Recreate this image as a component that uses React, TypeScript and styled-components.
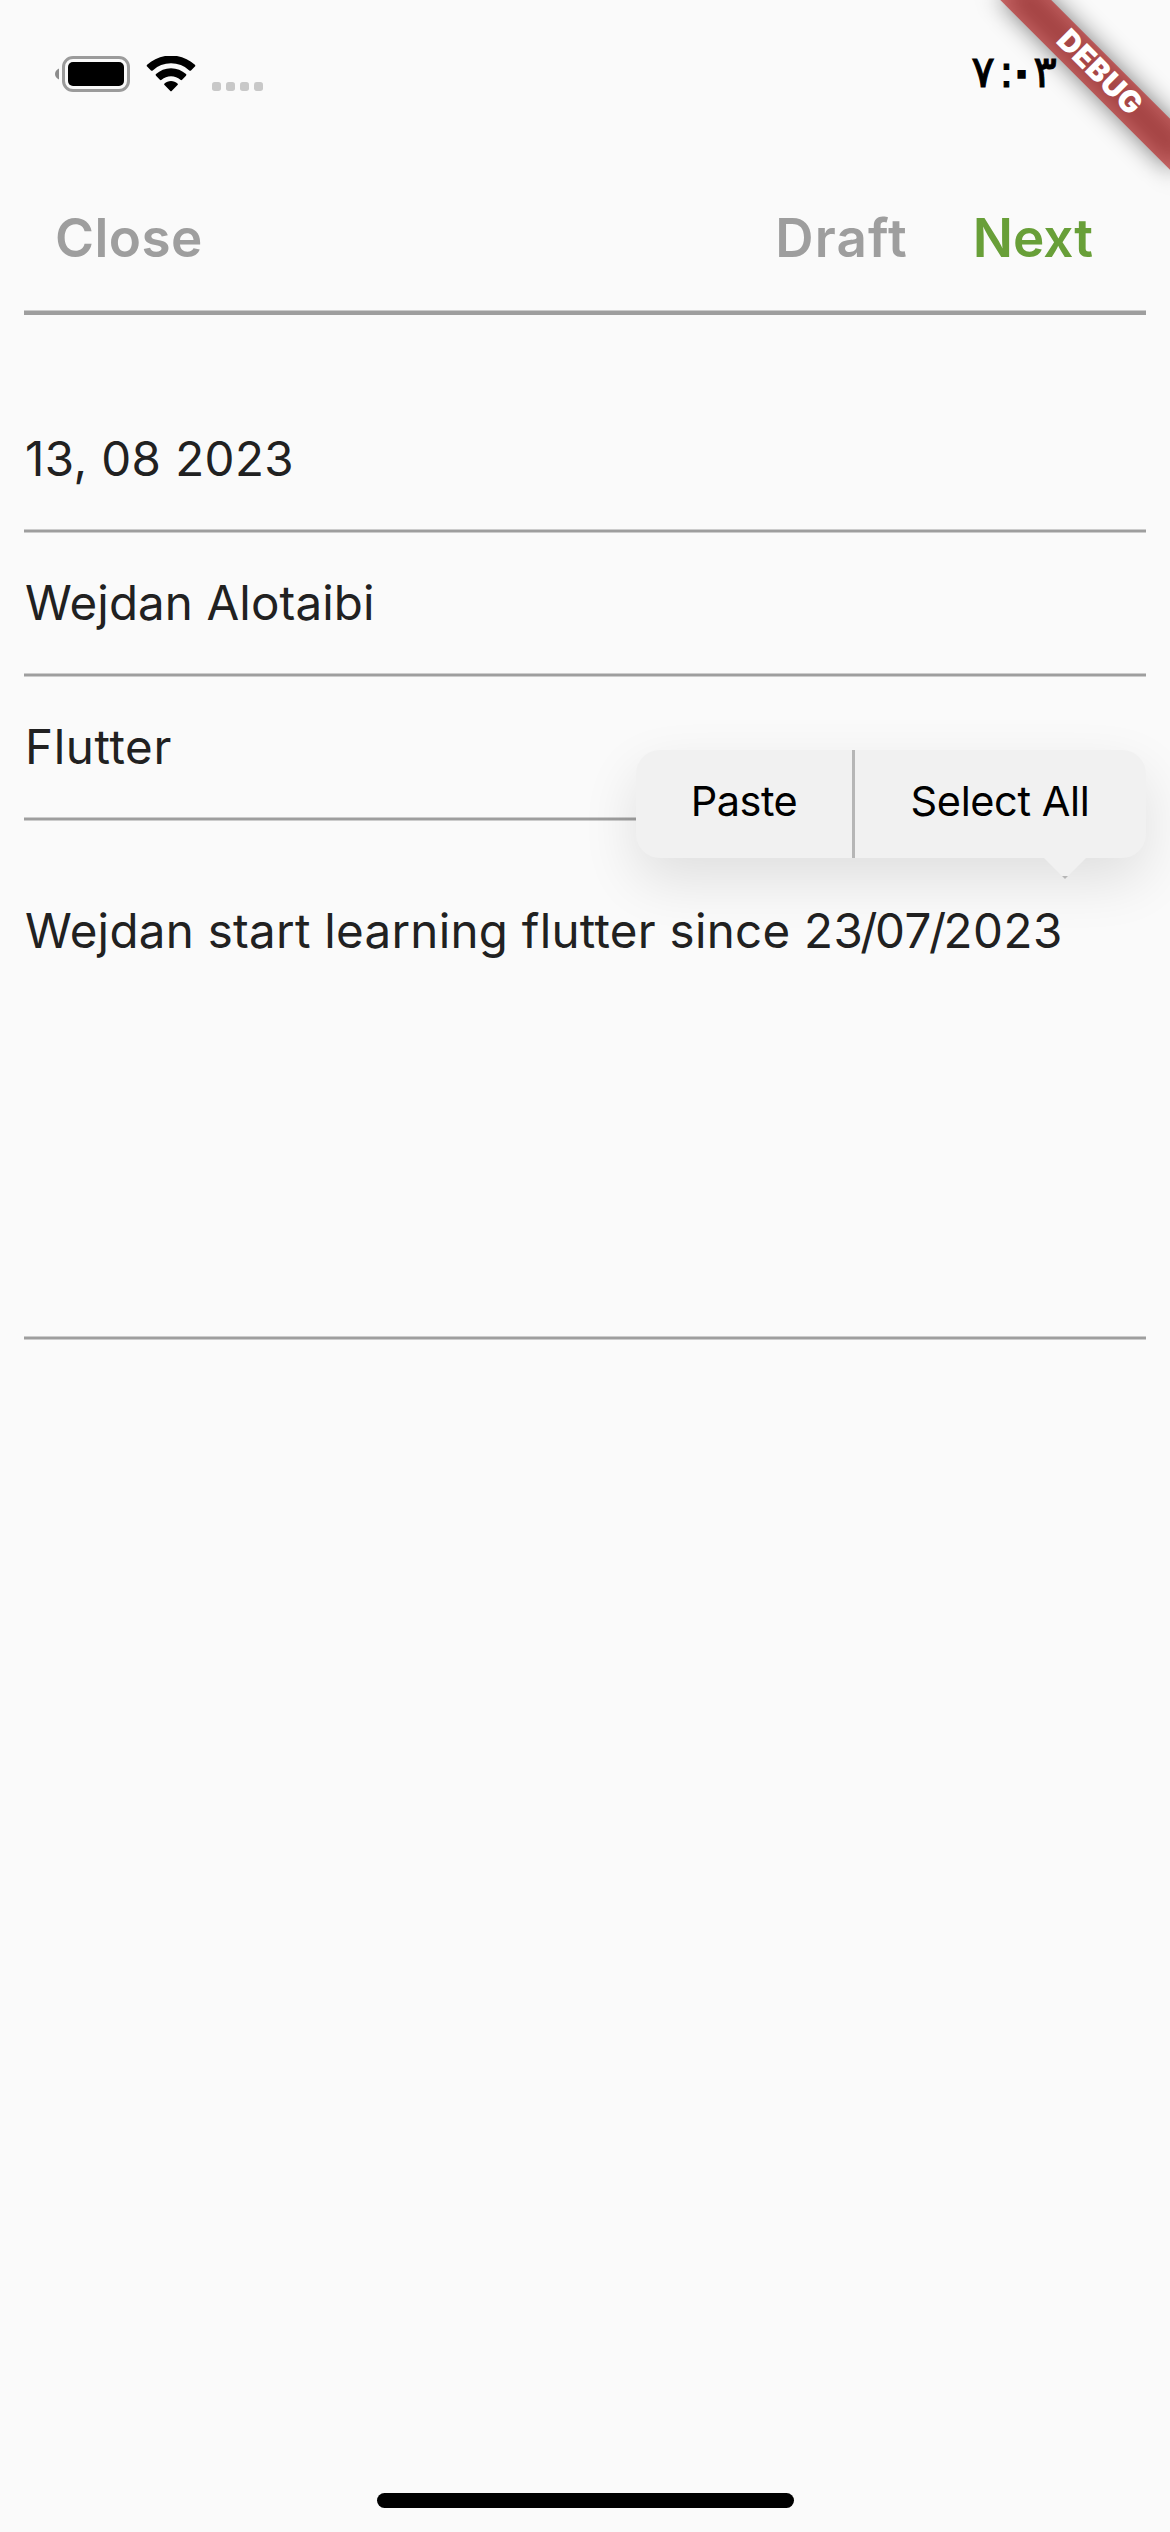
import React from "react";
import styled, { createGlobalStyle } from "styled-components";

const GlobalStyle = createGlobalStyle`
  * { box-sizing: border-box; }
  body { margin: 0; background: #fafafa; }
`;

const Screen = styled.main`
  position: relative;
  display: flex;
  flex-direction: column;
  width: 1170px;
  height: 2532px;
  overflow: hidden;
  background: #fafafa;
  color: #212121;
  font-family: Inter, Roboto, "Liberation Sans", sans-serif;
`;

const StatusBar = styled.header`
  display: flex;
  justify-content: space-between;
  align-items: center;
  height: 148px;
  padding: 0 113px 0 55px;
`;

const StatusIcons = styled.div`
  display: flex;
  svg { display: block; }
`;

const Clock = styled.time`
  margin-bottom: 5px;
  color: #000;
  font-family: "DejaVu Sans", sans-serif;
  font-size: 44px;
  line-height: 60px;
  -webkit-text-stroke: 1px #000;
`;

const Colon = styled.span`
  margin: 0 -4px 0 4px;
`;

const ZeroDigit = styled.span`
  -webkit-text-stroke: 3.5px #000;
`;

const Toolbar = styled.nav`
  display: flex;
  align-items: center;
  height: 144px;
  margin-top: 18px;
  padding: 0 77px 0 55px;
`;

const ToolbarButton = styled.button<{ $primary?: boolean; $push?: boolean; $spacing: number }>`
  margin: ${(p) => (p.$push ? "0 65px 0 auto" : "0")};
  padding: 0;
  border: 0;
  background: none;
  color: ${(p) => (p.$primary ? "#689f38" : "#9e9e9e")};
  font: 570 53px/64px Inter, sans-serif;
  letter-spacing: ${(p) => p.$spacing}px;
`;

const ToolbarRule = styled.div`
  height: 5px;
  margin: 0 24px 74px;
  background: linear-gradient(#cbcbcb 1px, #9e9e9e 1px);
`;

const Form = styled.section`
  display: flex;
  flex-direction: column;
  padding: 0 24px;
`;

const Field = styled.div<{ $multiline?: boolean }>`
  display: flex;
  flex-direction: column;
  justify-content: space-between;
  height: ${(p) => (p.$multiline ? 519 : 144)}px;
  padding-top: ${(p) => (p.$multiline ? 80 : 40)}px;
`;

const Value = styled.span<{ $spacing: number }>`
  padding-left: 1px;
  font-size: 47.5px;
  font-weight: 380;
  line-height: 60px;
  white-space: nowrap;
  letter-spacing: ${(p) => p.$spacing}px;
`;

const Digits = styled.span`
  letter-spacing: 0.5px;
`;

const Slash = styled.span`
  margin: 0 -3px;
`;

const Rule = styled.div`
  height: 4px;
  background: linear-gradient(#cccccc 1px, #9e9e9e 1px, #9e9e9e 3px, #cccccc 3px);
`;

const SelectionMenu = styled.div`
  position: absolute;
  left: 636px;
  top: 750px;
  display: flex;
  width: 510px;
  height: 108px;
  border-radius: 24px;
  background: #f1f1f1;
  box-shadow: 0 22px 55px rgba(0, 0, 0, 0.11);
`;

const MenuItem = styled.button<{ $width: number; $spacing: number }>`
  width: ${(p) => p.$width}px;
  padding: 0 0 7px;
  border: 0;
  background: none;
  color: #000;
  font: 380 41.5px/50px Inter, sans-serif;
  letter-spacing: ${(p) => p.$spacing}px;
  white-space: nowrap;
`;

const MenuDivider = styled.div`
  width: 3px;
  background: #b6b6b6;
`;

const MenuArrow = styled.svg`
  position: absolute;
  left: 408px;
  top: 108px;
`;

const BannerClip = styled.div`
  position: absolute;
  top: 0;
  right: 0;
  width: 260px;
  height: 260px;
  overflow: hidden;
`;

const Banner = styled.div`
  position: absolute;
  left: 140px;
  top: 84px;
  width: 240px;
  height: 36px;
  display: flex;
  align-items: center;
  justify-content: center;
  transform: rotate(45deg);
  transform-origin: 120px -84px;

  &::before {
    content: "";
    position: absolute;
    inset: 0;
    background: rgba(0, 0, 0, 0.5);
    filter: blur(12px);
  }

  &::after {
    content: "";
    position: absolute;
    inset: 0;
    background: rgba(183, 28, 28, 0.627);
  }
`;

const BannerText = styled.span`
  position: relative;
  z-index: 1;
  padding: 0 0 4px 3px;
  color: #fff;
  font-size: 30px;
  font-weight: 900;
  line-height: 36px;
  letter-spacing: 0.4px;
`;

const HomeIndicator = styled.div`
  width: 417px;
  height: 15px;
  margin: auto auto 24px 377px;
  border-radius: 8px;
  background: #000;
`;

export default function App() {
  return (
    <>
      <GlobalStyle />
      <Screen>
        <StatusBar>
          <StatusIcons>
            <svg width="208" height="36" viewBox="0 0 208 36">
              <path d="M4 12.5V23.5C1.6 22.6 0 20.5 0 18s1.6-4.6 4-5.5Z" fill="#8c8c8c" />
              <rect x="8.5" y="1.5" width="65" height="33" rx="9.5" fill="none" stroke="#9b9b9b" strokeWidth="3" />
              <rect x="13" y="6" width="56" height="24" rx="5" fill="#000" />
              <g transform="translate(116 36)" fill="#000">
                <path d="M0-36.5C9.2-36.5 17.600-33 23.900-27.200a1.200 1.200 0 0 1 0 1.700L20-21.600a1.200 1.200 0 0 1-1.700 0A27 27 0 0 0-18.300-21.600a1.200 1.200 0 0 1-1.700 0L-23.900-25.500a1.200 1.200 0 0 1 0-1.700C-17.600-33-9.200-36.500 0-36.500Z" />
                <path d="M0-23.700c5.800 0 11 2.200 15 5.800a1.200 1.200 0 0 1 0 1.700l-3.900 3.900a1.200 1.200 0 0 1-1.700 0A14.200 14.200 0 0 0-9.400-12.300a1.200 1.200 0 0 1-1.700 0L-15-16.200a1.200 1.200 0 0 1 0-1.700C-11-21.500-5.800-23.700 0-23.700Z" />
                <path d="M0-11c2.500 0 4.800.9 6.500 2.400.5.500.5 1.200 0 1.700L.9-1.300a1.200 1.200 0 0 1-1.800 0L-6.500-6.900c-.5-.5-.5-1.200 0-1.700C-4.800-10.100-2.500-11 0-11Z" />
              </g>
              {[157, 171, 185, 199].map((x) => (
                <rect key={x} x={x} y="26" width="9" height="9" rx="2.7" fill="#c8c8c8" />
              ))}
            </svg>
          </StatusIcons>
          <Clock>٧<Colon>:</Colon><ZeroDigit>٠</ZeroDigit>٣</Clock>
        </StatusBar>

        <Toolbar>
          <ToolbarButton $spacing={0.4}>Close</ToolbarButton>
          <ToolbarButton $push $spacing={1.2}>Draft</ToolbarButton>
          <ToolbarButton $primary $spacing={0}>Next</ToolbarButton>
        </Toolbar>
        <ToolbarRule />

        <Form>
          <Field>
            <Value $spacing={0.4}>13, 08 2023</Value>
            <Rule />
          </Field>
          <Field>
            <Value $spacing={0.1}>Wejdan Alotaibi</Value>
            <Rule />
          </Field>
          <Field>
            <Value $spacing={0.6}>Flutter</Value>
            <Rule />
          </Field>
          <Field $multiline>
            <Value $spacing={0.27}>
              Wejdan start learning flutter since{" "}
              <Digits>23<Slash>/</Slash>07<Slash>/</Slash>2023</Digits>
            </Value>
            <Rule />
          </Field>
        </Form>

        <HomeIndicator />

        <SelectionMenu>
          <MenuItem $width={216} $spacing={-0.5}>Paste</MenuItem>
          <MenuDivider />
          <MenuItem $width={290} $spacing={-0.4}>Select All</MenuItem>
          <MenuArrow width="42" height="21" viewBox="0 0 42 21">
            <path d="M0 0H42L21 21Z" fill="#f1f1f1" />
            <path d="M18 18H24L21 21Z" fill="#b6b6b6" />
          </MenuArrow>
        </SelectionMenu>

        <BannerClip>
          <Banner>
            <BannerText>DEBUG</BannerText>
          </Banner>
        </BannerClip>
      </Screen>
    </>
  );
}
